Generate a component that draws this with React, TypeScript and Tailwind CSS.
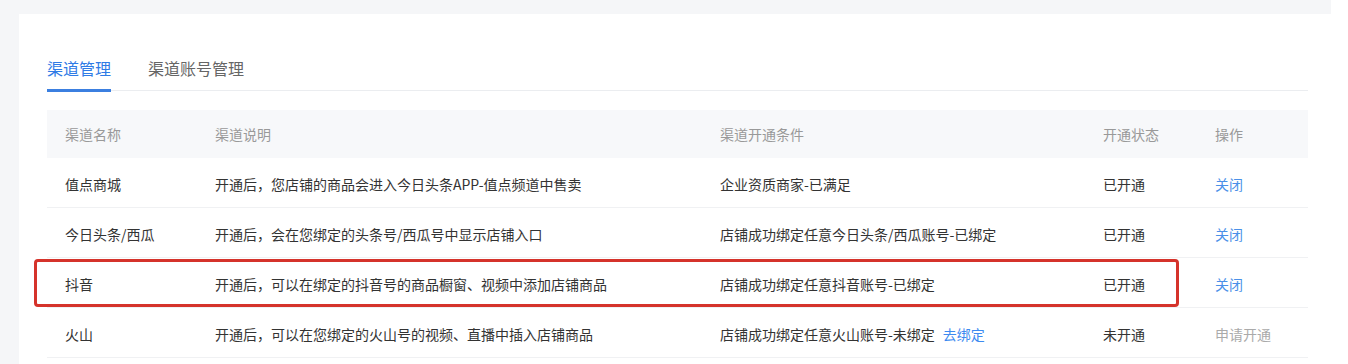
const rows = [
  {
    name: "值点商城",
    desc: "开通后，您店铺的商品会进入今日头条APP-值点频道中售卖",
    cond: "企业资质商家-已满足",
    bind: false,
    status: "已开通",
    action: "关闭",
    open: true,
  },
  {
    name: "今日头条/西瓜",
    desc: "开通后，会在您绑定的头条号/西瓜号中显示店铺入口",
    cond: "店铺成功绑定任意今日头条/西瓜账号-已绑定",
    bind: false,
    status: "已开通",
    action: "关闭",
    open: true,
  },
  {
    name: "抖音",
    desc: "开通后，可以在绑定的抖音号的商品橱窗、视频中添加店铺商品",
    cond: "店铺成功绑定任意抖音账号-已绑定",
    bind: false,
    status: "已开通",
    action: "关闭",
    open: true,
    marked: true,
  },
  {
    name: "火山",
    desc: "开通后，可以在您绑定的火山号的视频、直播中插入店铺商品",
    cond: "店铺成功绑定任意火山账号-未绑定",
    bind: true,
    status: "未开通",
    action: "申请开通",
    open: false,
  },
];

const cols = "grid grid-cols-[168px_505px_383px_112px_1fr] items-center";

const App = () => {
  return (
    <div
      className="h-[364px] w-[1348px] overflow-hidden bg-white"
      style={{ fontFamily: '"Noto Sans CJK SC", "Noto Sans", sans-serif' }}
    >
      <div className="h-[14px] w-[1331px] bg-[#f5f6f8]" />
      <div className="flex h-[350px]">
        <div className="w-[19px] shrink-0 bg-[#f5f6f8]" />
        <div className="flex-1 bg-white pl-[28px] pr-[40px] pt-[42px]">
          {/* tabs */}
          <div className="flex gap-[37px] border-b border-[#ebedf0] text-[16px] leading-[24px]">
            <div className="-mb-[2px] border-b-[3px] border-[#3b7fe0] pb-[9px] text-[#2f7be6]">
              渠道管理
            </div>
            <div className="pb-[9px] text-[#666]">渠道账号管理</div>
          </div>

          {/* table */}
          <div className="relative mt-[19px] text-[14px]">
            <div className={`${cols} h-[48px] bg-[#f7f8fa] text-[#999]`}>
              <div className="pl-[18px]">渠道名称</div>
              <div>渠道说明</div>
              <div>渠道开通条件</div>
              <div>开通状态</div>
              <div>操作</div>
            </div>
            {rows.map((r) => (
              <div
                key={r.name}
                className={`${cols} relative h-[50px] border-b border-[#f0f1f3] pt-[3px] text-[#333]`}
              >
                <div className="pl-[18px]">{r.name}</div>
                <div>{r.desc}</div>
                <div>
                  {r.cond}
                  {r.bind && <span className="ml-[8px] text-[#3d8af0]">去绑定</span>}
                </div>
                <div>{r.status}</div>
                <div className={r.open ? "text-[#4a90e8]" : "text-[#aaa]"}>{r.action}</div>
                {r.marked && (
                  <div className="pointer-events-none absolute left-[-13px] top-[1px] h-[48px] w-[1145px] rounded-[4px] border-[3px] border-[#d5332b]" />
                )}
              </div>
            ))}
          </div>
        </div>
      </div>
    </div>
  );
};

export default App;
